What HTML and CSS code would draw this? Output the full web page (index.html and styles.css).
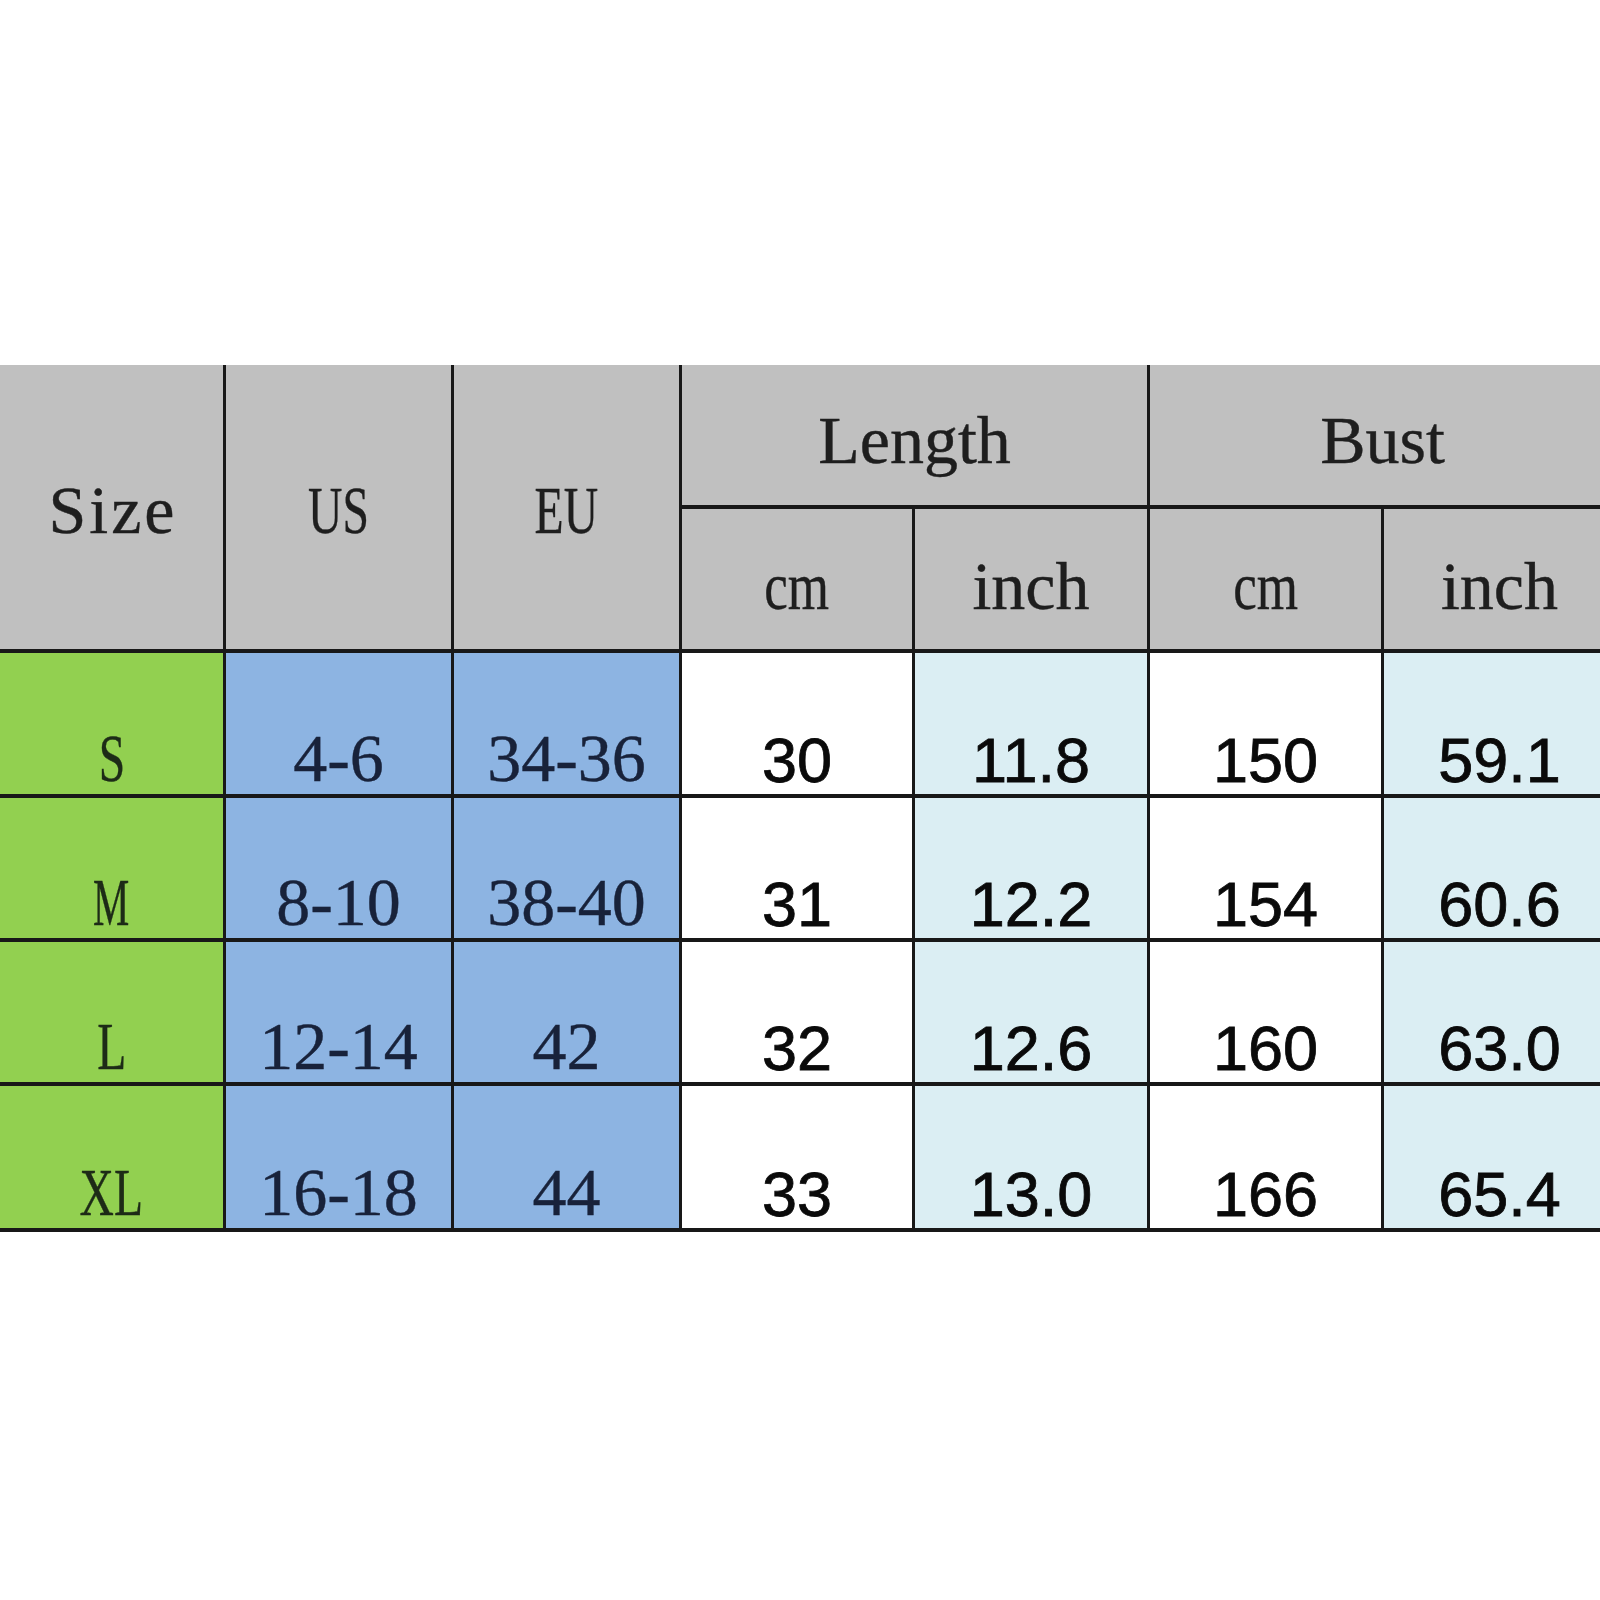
FILE: index.html
```html
<!DOCTYPE html>
<html>
<head>
<meta charset="utf-8">
<link rel="stylesheet" href="styles.css">
</head>
<body>
<div class="chart">
  <div class="cell hd tall"><span class="serif spaced">Size</span></div>
  <div class="cell hd tall"><span class="serif caps">US</span></div>
  <div class="cell hd tall"><span class="serif caps">EU</span></div>
  <div class="cell hd group"><span class="serif">Length</span></div>
  <div class="cell hd group"><span class="serif">Bust</span></div>
  <div class="cell hd sub"><span class="serif narrow">cm</span></div>
  <div class="cell hd sub"><span class="serif">inch</span></div>
  <div class="cell hd sub"><span class="serif narrow">cm</span></div>
  <div class="cell hd sub"><span class="serif">inch</span></div>

  <div class="cell size"><span class="serif caps">S</span></div>
  <div class="cell conv"><span class="serif">4-6</span></div>
  <div class="cell conv"><span class="serif">34-36</span></div>
  <div class="cell num"><span>30</span></div>
  <div class="cell num alt"><span>11.8</span></div>
  <div class="cell num"><span>150</span></div>
  <div class="cell num alt"><span>59.1</span></div>

  <div class="cell size"><span class="serif caps tight">M</span></div>
  <div class="cell conv"><span class="serif">8-10</span></div>
  <div class="cell conv"><span class="serif">38-40</span></div>
  <div class="cell num"><span>31</span></div>
  <div class="cell num alt"><span>12.2</span></div>
  <div class="cell num"><span>154</span></div>
  <div class="cell num alt"><span>60.6</span></div>

  <div class="cell size"><span class="serif caps">L</span></div>
  <div class="cell conv"><span class="serif">12-14</span></div>
  <div class="cell conv"><span class="serif">42</span></div>
  <div class="cell num"><span>32</span></div>
  <div class="cell num alt"><span>12.6</span></div>
  <div class="cell num"><span>160</span></div>
  <div class="cell num alt"><span>63.0</span></div>

  <div class="cell size"><span class="serif caps">XL</span></div>
  <div class="cell conv"><span class="serif">16-18</span></div>
  <div class="cell conv"><span class="serif">44</span></div>
  <div class="cell num"><span>33</span></div>
  <div class="cell num alt"><span>13.0</span></div>
  <div class="cell num"><span>166</span></div>
  <div class="cell num alt"><span>65.4</span></div>
</div>
</body>
</html>
```

FILE: styles.css
```css
html, body {
  margin: 0;
  padding: 0;
  background: #ffffff;
  overflow: hidden;
}

.chart {
  margin-top: 365px;
  width: 1615px;
  display: grid;
  grid-template-columns: 223px 225px 225px 230px 232px 231px 231px;
  grid-template-rows: 140px 140px 141px 140px 140px 142px;
  column-gap: 3px;
  row-gap: 4px;
  padding-bottom: 4px;
  background: #181818;
}

.chart > .cell:nth-child(6) { grid-column: 4; }

.cell {
  display: flex;
  justify-content: center;
  align-items: flex-end;
}

.serif {
  display: inline-block;
  font-family: "Liberation Serif", "Times New Roman", serif;
  font-size: 68px;
  line-height: 40px;
  white-space: nowrap;
  -webkit-text-stroke: 0.4px currentColor;
}

.serif.caps {
  transform: scaleX(0.7);
}

.serif.caps.tight {
  transform: scaleX(0.6);
}

.serif.narrow {
  transform: scaleX(0.78);
}

.serif.spaced {
  letter-spacing: 3px;
  margin-right: -3px;
}

.hd {
  background: #c0c0c0;
  color: #1e1e1e;
}

.tall {
  grid-row: 1 / span 2;
  align-items: center;
  padding-top: 5px;
}

.group {
  grid-column: span 2;
  padding-bottom: 45px;
}

.sub {
  padding-bottom: 43px;
}

.size {
  background: #92d050;
  color: #1d2b17;
  padding-bottom: 16px;
}

.conv {
  background: #8db4e2;
  color: #18223a;
  padding-bottom: 16px;
}

.num {
  background: #ffffff;
  color: #0a0a0a;
  padding-bottom: 14px;
}

.num.alt {
  background: #dbeef3;
}

.num span {
  font-family: "Liberation Sans", Arial, sans-serif;
  font-size: 63px;
  line-height: 40px;
  white-space: nowrap;
  -webkit-text-stroke: 0.8px #0a0a0a;
}
```
